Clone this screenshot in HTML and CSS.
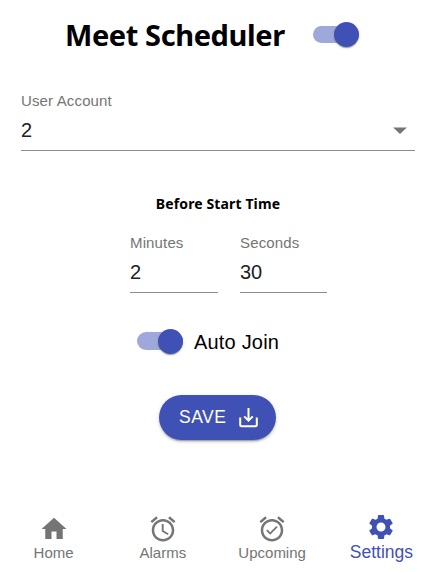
FILE: index.html
```html
<!DOCTYPE html>
<html lang="en">
<head>
<meta charset="utf-8">
<title>Meet Scheduler</title>
<link rel="stylesheet" href="styles.css">
</head>
<body>
<header class="header">
  <h1 class="title">Meet Scheduler</h1>
  <span class="switch" role="switch" aria-checked="true"><span class="thumb"></span></span>
</header>
<main>
  <div class="field account">
    <div class="label">User Account</div>
    <div class="value">2<svg class="arrow" viewBox="0 0 24 24"><path d="M6.5 10l5.5 5.2 5.5-5.2z"/></svg></div>
  </div>
  <h2 class="subtitle"><span>Before Start Time</span></h2>
  <div class="times">
    <div class="field minutes"><div class="label">Minutes</div><div class="value">2</div></div>
    <div class="field seconds"><div class="label">Seconds</div><div class="value">30</div></div>
  </div>
  <div class="auto">
    <span class="switch" role="switch" aria-checked="true"><span class="thumb"></span></span>
    <span class="auto-text">Auto Join</span>
  </div>
  <button class="save"><span class="save-text">SAVE</span>
    <svg class="save-icon" viewBox="0 0 20 20"><path d="M1.2 9.5v7.2q0 1.5 1.5 1.5h13.6q1.5 0 1.5-1.5V9.5M9.5 0v12.5M5.2 8.4l4.3 4.3 4.3-4.3"/></svg>
  </button>
</main>
<nav class="nav">
  <a class="item"><svg viewBox="0 0 24 24"><path d="M10 20v-6h4v6h5v-8h3L12 3 2 12h3v8z"/></svg><span class="home">Home</span></a>
  <a class="item"><svg viewBox="0 0 24 24"><path d="M22 5.72l-4.6-3.86-1.29 1.53 4.6 3.86L22 5.72zM7.88 3.39L6.6 1.86 2 5.71l1.29 1.53 4.59-3.85zM12.5 8H11v6l4.75 2.85.75-1.23-4-2.37V8zM12 4c-4.97 0-9 4.03-9 9s4.02 9 9 9c4.97 0 9-4.03 9-9s-4.03-9-9-9zm0 16c-3.87 0-7-3.13-7-7s3.13-7 7-7 7 3.13 7 7-3.13 7-7 7z"/></svg><span class="alarms">Alarms</span></a>
  <a class="item"><svg viewBox="0 0 24 24"><path d="M22 5.72l-4.6-3.86-1.29 1.53 4.6 3.86L22 5.72zM7.88 3.39L6.6 1.86 2 5.71l1.29 1.53 4.59-3.85zM12 4c-4.97 0-9 4.03-9 9s4.02 9 9 9c4.97 0 9-4.03 9-9s-4.03-9-9-9zm0 16c-3.87 0-7-3.13-7-7s3.13-7 7-7 7 3.13 7 7-3.13 7-7 7zm-1.46-5.47L8.41 12.4l-1.06 1.06 3.18 3.18 6-6-1.06-1.06-4.93 4.95z"/></svg><span class="upcoming">Upcoming</span></a>
  <a class="item active"><svg viewBox="0 0 24 24"><path d="M19.14 12.94c.04-.3.06-.61.06-.94 0-.32-.02-.64-.07-.94l2.03-1.58c.18-.14.23-.41.12-.61l-1.92-3.32c-.12-.22-.37-.29-.59-.22l-2.39.96c-.5-.38-1.03-.7-1.62-.94l-.36-2.54c-.04-.24-.24-.41-.48-.41h-3.84c-.24 0-.43.17-.47.41l-.36 2.54c-.59.24-1.13.57-1.62.94l-2.39-.96c-.22-.08-.47 0-.59.22L2.74 8.87c-.12.21-.08.47.12.61l2.03 1.58c-.05.3-.09.63-.09.94s.02.64.07.94l-2.03 1.58c-.18.14-.23.41-.12.61l1.92 3.32c.12.22.37.29.59.22l2.39-.96c.5.38 1.03.7 1.62.94l.36 2.54c.05.24.24.41.48.41h3.84c.24 0 .44-.17.47-.41l.36-2.54c.59-.24 1.13-.56 1.62-.94l2.39.96c.22.08.47 0 .59-.22l1.92-3.32c.12-.22.07-.47-.12-.61l-2.01-1.58zM12 15.6c-1.98 0-3.6-1.62-3.6-3.6s1.62-3.6 3.6-3.6 3.6 1.62 3.6 3.6-1.62 3.6-3.6 3.6z"/></svg><span class="settings">Settings</span></a>
</nav>
</body>
</html>
```
FILE: styles.css
```css
* { box-sizing: border-box; }
body {
  margin: 0;
  width: 436px;
  height: 572px;
  overflow: hidden;
  display: flex;
  flex-direction: column;
  background: #fff;
  color: #000;
  font-family: "Liberation Sans", Arial, sans-serif;
}
.header { display: flex; align-items: center; height: 69px; padding-left: 65px; }
.title {
  margin: 0;
  width: 248px;
  font: 700 29px/40px "Noto Sans", sans-serif;
  letter-spacing: -0.4px;
  white-space: nowrap;
}
.switch {
  display: flex;
  align-items: center;
  justify-content: flex-end;
  flex: none;
  width: 46px;
  height: 17.5px;
  border-radius: 9px;
  background: #9fa8da;
}
.thumb {
  flex: none;
  width: 25px;
  height: 25px;
  border-radius: 50%;
  background: #3f51b5;
  box-shadow: 0 2px 1px -1px rgba(0,0,0,.2), 0 1px 1px rgba(0,0,0,.14), 0 1px 3px rgba(0,0,0,.12);
}
main { display: flex; flex-direction: column; height: 441px; }
.field { border-bottom: 1px solid #8c8c8c; }
.label { font-size: 15px; line-height: 18px; letter-spacing: 0.14px; color: #757575; white-space: nowrap; }
.value {
  display: flex;
  justify-content: space-between;
  align-items: center;
  height: 40px;
  font-size: 20px;
  color: #212121;
}
.account { margin: 23px 21px 0; height: 59px; }
.arrow { width: 30px; height: 30px; fill: #757575; }
.subtitle {
  margin: 43px 0 0;
  text-align: center;
  font: 700 14px/20px "Noto Sans", sans-serif;
  letter-spacing: 0.12px;
}
.times { display: flex; gap: 22px; margin: 20px 0 0 130px; }
.times .field { width: 88px; height: 59px; }
.times .seconds { width: 87px; }
.auto { display: flex; align-items: center; gap: 11px; margin: 35px 0 0 137px; height: 27px; }
.auto .switch { margin-bottom: 1px; }
.auto-text { font-size: 20px; line-height: 26px; letter-spacing: 0.19px; white-space: nowrap; }
.save {
  display: flex;
  align-items: center;
  flex: none;
  width: 117px;
  height: 45px;
  margin: 40px 0 0 159px;
  padding: 0 0 0 20px;
  border: 0;
  border-radius: 23px;
  background: #3f51b5;
  color: #fff;
  font: 17.5px "Liberation Sans", Arial, sans-serif;
  letter-spacing: 0.5px;
  box-shadow: 0 3px 1px -2px rgba(0,0,0,.2), 0 2px 2px rgba(0,0,0,.14), 0 1px 5px rgba(0,0,0,.12);
}
.save-text { width: 60px; text-align: left; }
.save-icon { width: 20px; height: 20px; fill: none; stroke: #fff; stroke-width: 2; }
.nav { display: flex; height: 62px; margin-left: -1px; }
.item {
  display: flex;
  flex-direction: column;
  align-items: center;
  width: 109.3px;
  padding-top: 4px;
  font-size: 15px;
  line-height: 18px;
  color: #757575;
}
.item svg { width: 30px; height: 30px; fill: currentColor; }
.active { padding-top: 2px; font-size: 17.5px; line-height: 20px; color: #3f51b5; }
```
